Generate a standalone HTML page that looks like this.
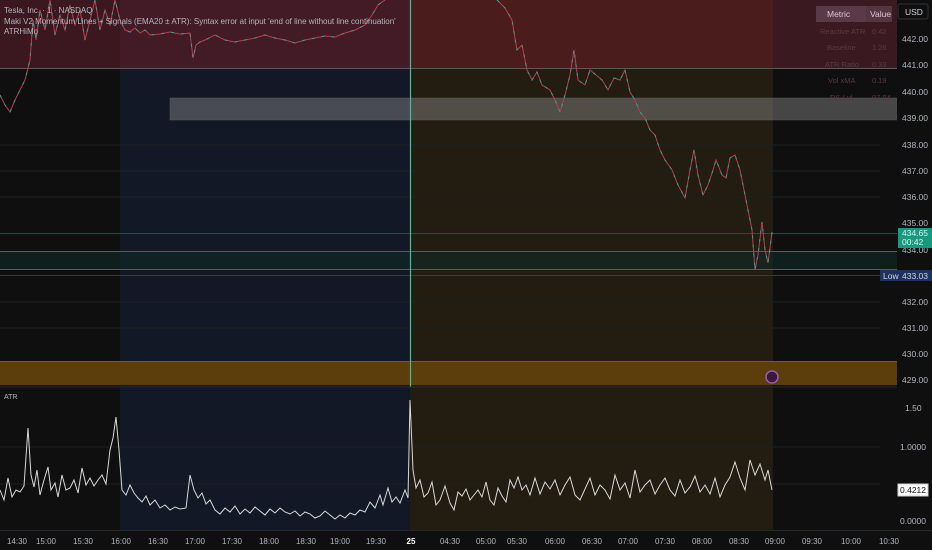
<!DOCTYPE html>
<html><head><meta charset="utf-8"><style>
html,body{margin:0;padding:0;background:#0f0f0f;width:932px;height:550px;overflow:hidden;font-family:"Liberation Sans",sans-serif}
svg{display:block}
</style></head><body>
<svg width="932" height="550" xmlns="http://www.w3.org/2000/svg" font-family="Liberation Sans, sans-serif">
<rect width="932" height="550" fill="#0f0f0f"/>
<rect x="120" y="0" width="290" height="530" fill="#131826"/>
<rect x="410" y="0" width="363" height="530" fill="#221c11"/>
<rect x="0" y="0" width="120" height="68" fill="#3b1820"/>
<rect x="120" y="0" width="290" height="68" fill="#431b26"/>
<rect x="410" y="0" width="363" height="68" fill="#4a1c1c"/>
<rect x="773" y="0" width="124" height="68" fill="#3a1a20"/>
<g stroke="#1f1f22" stroke-width="1">
<line x1="0" y1="145" x2="880" y2="145"/><line x1="0" y1="171" x2="880" y2="171"/><line x1="0" y1="197" x2="880" y2="197"/>
<line x1="0" y1="302" x2="880" y2="302"/><line x1="0" y1="328" x2="880" y2="328"/>
<line x1="0" y1="447" x2="880" y2="447"/><line x1="0" y1="484" x2="880" y2="484"/>
</g>
<g stroke="#5a5a5a" stroke-width="1">
<line x1="0" y1="68.5" x2="897" y2="68.5"/>
<line x1="0" y1="251.5" x2="897" y2="251.5"/>
<line x1="0" y1="269.5" x2="897" y2="269.5"/>
</g>
<line x1="0" y1="233.5" x2="897" y2="233.5" stroke="#2e4a44"/>
<rect x="0" y="252" width="897" height="17" fill="#0f2a26" opacity="0.6"/>
<line x1="0" y1="275.5" x2="880" y2="275.5" stroke="#3a3a3a"/>
<rect x="170" y="98" width="727" height="22" fill="#8a8a8a" opacity="0.45" stroke="#aaa" stroke-opacity="0.5"/>
<rect x="0" y="361" width="897" height="24" fill="#5c3d0c"/>
<line x1="0" y1="361.5" x2="897" y2="361.5" stroke="#7a5a20"/>
<line x1="410.5" y1="0" x2="410.5" y2="387" stroke="#3fbf9a" stroke-width="1.2"/>
<g fill="none" stroke-width="1">
<polyline id="p1" stroke="#c43a4a" points="0,95 5,105 10,112 15,100 20,90 25,80 30,60 33,20 36,40 40,10 45,30 50,0 55,35 60,15 65,30 70,5 75,25 80,10 85,40 90,20 95,0 100,30 105,10 110,25 115,0 120,20 125,30 130,32 135,28 140,33 145,30 150,35 160,34 170,32 180,34 190,33 193,58 196,45 200,42 205,40 215,35 225,40 235,42 245,40 255,38 265,35 275,38 285,40 295,43 305,40 315,38 325,36 335,37 345,33 355,30 365,25 372,15 378,5 385,0"/>
<polyline stroke="#26a69a" stroke-dasharray="3 7" points="0,95 5,105 10,112 15,100 20,90 25,80 30,60 33,20 36,40 40,10 45,30 50,0 55,35 60,15 65,30 70,5 75,25 80,10 85,40 90,20 95,0 100,30 105,10 110,25 115,0 120,20 125,30 130,32 135,28 140,33 145,30 150,35 160,34 170,32 180,34 190,33 193,58 196,45 200,42 205,40 215,35 225,40 235,42 245,40 255,38 265,35 275,38 285,40 295,43 305,40 315,38 325,36 335,37 345,33 355,30 365,25 372,15 378,5 385,0"/>
<polyline stroke="#c43a4a" points="497,0 505,8 512,20 517,50 522,45 527,70 532,80 537,72 542,85 550,90 555,100 560,112 565,95 570,75 574,50 578,80 585,85 590,70 596,75 602,80 608,90 614,78 620,80 625,70 630,92 635,100 640,112 645,118 650,130 655,135 660,150 665,160 672,170 678,185 685,198 690,170 694,150 698,175 703,195 708,185 713,170 716,160 722,175 726,178 730,158 735,155 740,170 743,185 748,210 752,230 755,270 758,255 762,222 765,250 768,263 772,232"/>
<polyline stroke="#26a69a" stroke-dasharray="3 6" points="497,0 505,8 512,20 517,50 522,45 527,70 532,80 537,72 542,85 550,90 555,100 560,112 565,95 570,75 574,50 578,80 585,85 590,70 596,75 602,80 608,90 614,78 620,80 625,70 630,92 635,100 640,112 645,118 650,130 655,135 660,150 665,160 672,170 678,185 685,198 690,170 694,150 698,175 703,195 708,185 713,170 716,160 722,175 726,178 730,158 735,155 740,170 743,185 748,210 752,230 755,270 758,255 762,222 765,250 768,263 772,232"/>
</g>
<circle cx="772" cy="377" r="6" fill="#3a1a3a" stroke="#9a5ab8" stroke-width="1.5"/>
<line x1="0" y1="387" x2="932" y2="387" stroke="#2a2a2a"/>
<polyline fill="none" stroke="#d8d8d8" stroke-width="1" points="0,490 4,500 8,478 12,497 16,490 20,492 24,486 28,428 31,475 34,487 37,470 40,495 44,480 48,467 51,490 55,483 58,497 62,475 66,490 70,488 74,480 78,493 82,468 86,485 90,478 94,486 98,480 102,475 106,484 110,450 113,438 116,417 119,450 122,490 126,495 130,485 134,493 138,498 142,502 146,496 150,505 155,500 160,508 165,505 170,510 175,507 180,509 186,508 190,475 194,490 198,498 202,493 206,504 210,500 215,510 220,514 225,508 230,512 235,506 240,514 245,509 250,513 255,507 260,511 265,515 270,509 275,513 280,508 285,512 290,514 295,511 300,516 305,512 310,514 315,518 320,516 325,511 330,515 335,519 340,515 345,518 350,513 355,515 360,510 365,512 370,502 375,508 380,495 383,505 388,488 392,502 396,497 400,503 405,490 408,498 410,400 413,470 416,488 420,480 424,497 428,493 432,482 436,505 440,500 445,486 450,503 454,510 458,492 462,496 466,489 470,500 474,495 478,490 482,497 486,482 490,500 494,505 498,488 502,496 506,502 510,480 514,488 518,477 522,490 526,485 530,495 535,478 540,494 545,482 550,489 555,480 560,495 565,485 570,477 575,495 580,500 585,489 590,478 595,495 600,485 605,490 610,499 615,475 620,490 625,483 630,498 635,470 640,492 645,485 650,480 655,494 660,485 665,478 670,490 675,496 680,480 685,493 690,487 695,476 700,492 705,485 710,494 715,478 720,497 725,485 730,477 735,462 740,478 745,490 750,460 755,475 760,464 765,480 768,470 772,490"/>
<rect x="897" y="0" width="35" height="530" fill="#0f0f0f"/>
<g fill="#b2b5be" font-size="8.5">
<text x="902" y="42">442.00</text><text x="902" y="68">441.00</text><text x="902" y="95">440.00</text><text x="902" y="121">439.00</text>
<text x="902" y="148">438.00</text><text x="902" y="174">437.00</text><text x="902" y="200">436.00</text><text x="902" y="226">435.00</text>
<text x="902" y="253">434.00</text><text x="902" y="305">432.00</text><text x="902" y="331">431.00</text><text x="902" y="357">430.00</text><text x="902" y="383">429.00</text>
<text x="905" y="411">1.50</text><text x="900" y="450">1.0000</text><text x="900" y="524">0.0000</text>
</g>
<rect x="898" y="4" width="30" height="15" rx="2" fill="#0f0f0f" stroke="#333"/>
<text x="905" y="15" fill="#d1d4dc" font-size="8.5">USD</text>
<rect x="898" y="228" width="34" height="20" fill="#16997e"/>
<text x="902" y="236" fill="#e0f0ea" font-size="8.5">434.65</text>
<text x="902" y="245" fill="#e0f0ea" font-size="8.5">00:42</text>
<rect x="880" y="270" width="52" height="11" fill="#1e3260"/>
<text x="883" y="279" fill="#d1d4dc" font-size="8.5">Low</text>
<text x="902" y="279" fill="#d1d4dc" font-size="8.5">433.03</text>
<rect x="898" y="484" width="30" height="12" fill="#fff" stroke="#ccc"/>
<text x="900" y="493" fill="#111" font-size="8.5">0.4212</text>
<rect x="816" y="6" width="50" height="16" fill="#5a3a48"/>
<rect x="866" y="6" width="26" height="16" fill="#553542"/>
<text x="827" y="17" fill="#d8c8d0" font-size="8.5">Metric</text>
<text x="870" y="17" fill="#d8c8d0" font-size="8.5">Value</text>
<g fill="#5a3a40" font-size="7.5">
<text x="820" y="34">Reactive ATR</text><text x="872" y="34">0.42</text>
<text x="827" y="50">Baseline</text><text x="872" y="50">1.26</text>
<text x="825" y="67">ATR Ratio</text><text x="872" y="67">0.33</text>
<text x="828" y="83">Vol xMA</text><text x="872" y="83">0.19</text>
<text x="830" y="100">RS-Lvl</text><text x="872" y="100">97.04</text>
</g>
<g fill="#b2b5be" font-size="8">
<text x="4" y="13">Tesla, Inc. · 1 · NASDAQ</text>
<text x="4" y="24">Maki V2 Momentum Lines + Signals (EMA20 ± ATR): Syntax error at input 'end of line without line continuation'</text>
<text x="4" y="34">ATRHiMo</text>
<text x="4" y="399" font-size="7">ATR</text>
</g>
<line x1="0" y1="530.5" x2="932" y2="530.5" stroke="#2a2a2a"/>
<g fill="#b2b5be" font-size="8" text-anchor="middle">
<text x="17" y="544">14:30</text><text x="46" y="544">15:00</text><text x="83" y="544">15:30</text><text x="121" y="544">16:00</text>
<text x="158" y="544">16:30</text><text x="195" y="544">17:00</text><text x="232" y="544">17:30</text><text x="269" y="544">18:00</text>
<text x="306" y="544">18:30</text><text x="340" y="544">19:00</text><text x="376" y="544">19:30</text><text x="411" y="544" font-weight="bold" fill="#fff">25</text>
<text x="450" y="544">04:30</text><text x="486" y="544">05:00</text><text x="517" y="544">05:30</text><text x="555" y="544">06:00</text>
<text x="592" y="544">06:30</text><text x="628" y="544">07:00</text><text x="665" y="544">07:30</text><text x="702" y="544">08:00</text>
<text x="739" y="544">08:30</text><text x="775" y="544">09:00</text><text x="812" y="544">09:30</text><text x="851" y="544">10:00</text><text x="889" y="544">10:30</text>
</g>
</svg>
</body></html>
